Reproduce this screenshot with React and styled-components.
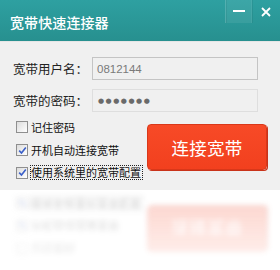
import React from "react";
import styled, { createGlobalStyle } from "styled-components";

const Global = createGlobalStyle`
  html, body { margin: 0; padding: 0; background: #ffffff; }
  body { width: 280px; height: 270px; overflow: hidden; font-family: "Noto Sans CJK SC", "Noto Sans", sans-serif; }
`;

const Page = styled.div`
  width: 280px;
  height: 270px;
  display: flex;
  flex-direction: column;
  background: #ffffff;
`;

const Window = styled.div`
  width: 280px;
  height: 190px;
  background: #f0f0f0;
  display: flex;
  flex-direction: column;
`;

const TitleBar = styled.div`
  height: 41px;
  flex: none;
  display: flex;
  align-items: flex-start;
  background: linear-gradient(#2ea0a1, #27908f);
  border-bottom: 1px solid #e6e6e6;
`;

const Title = styled.div`
  flex: 1;
  padding: 13px 0 0 10px;
  color: #ffffff;
  font-size: 14px;
  line-height: 18px;
  font-weight: 500;
  letter-spacing: 0.1px;
`;

const WinButton = styled.div`
  width: ${(p) => p.$w}px;
  height: 23px;
  display: flex;
  align-items: center;
  justify-content: center;
  background: ${(p) => (p.$hl ? "rgba(255,255,255,0.07)" : "transparent")};
  border-left: 1px solid rgba(255, 255, 255, 0.12);
  box-shadow: inset 1px 0 0 rgba(0, 0, 0, 0.06);
`;

const Form = styled.div`
  display: flex;
  flex-direction: column;
  gap: 9px;
  padding: 15px 22px 0 13px;
`;

const Row = styled.div`
  display: flex;
  align-items: center;
`;

const Label = styled.div`
  width: 79px;
  font-size: 12.5px;
  color: #222;
  line-height: 23px;
  white-space: nowrap;
`;

const Field = styled.div`
  flex: 1;
  height: 21px;
  border: 1px solid ${(p) => p.$border};
  background: #f0f0f0;
  display: flex;
  align-items: center;
  padding-left: 4px;
  font-family: "Liberation Sans", Arial, sans-serif;
  font-size: 11.5px;
  color: #7a7a7a;
`;

const Dots = styled.span`
  font-family: "DejaVu Sans", sans-serif;
  font-size: 7px;
  letter-spacing: 1.5px;
  color: #6a6a6a;
  padding-left: 1px;
`;

const Lower = styled.div`
  display: flex;
  padding: 4px 13px 2px 16px;
  height: 74px;
  box-sizing: border-box;
  opacity: ${(p) => (p.$ghost ? 0.24 : 1)};
`;

const Checks = styled.div`
  flex: 1;
  display: flex;
  flex-direction: column;
`;

const CheckRow = styled.div`
  height: 24px;
  display: flex;
  align-items: center;
  gap: 3px;
`;

const Box = styled.div`
  width: 10px;
  height: 10px;
  border: 1px solid #8f8f8f;
  background: linear-gradient(135deg, #dcdcdc, #ffffff);
  display: flex;
  align-items: center;
  justify-content: center;
  flex: none;
`;

const CheckText = styled.span`
  font-size: 11px;
  color: #111;
  line-height: 13px;
  outline: ${(p) => (p.$focus ? "1px dotted #222" : "none")};
  padding: 0 1px 0 0;
  white-space: nowrap;
`;

const ConnectButton = styled.div`
  margin-top: 8px;
  width: 118px;
  height: 44px;
  border: 1px solid #d9381a;
  border-radius: 4px;
  background: linear-gradient(#f74a27, #f2401e);
  box-shadow: 1px 1px 0 #c9331a;
  color: #ffffff;
  font-size: 17.5px;
  display: flex;
  align-items: center;
  justify-content: center;
  letter-spacing: 0.3px;
`;

const Reflection = styled.div`
  height: 80px;
  overflow: hidden;
  background: #ffffff;
`;

const Mirror = styled.div`
  transform: scaleY(-1);
  filter: blur(2.4px);
  -webkit-mask-image: linear-gradient(to top, rgba(0,0,0,1), rgba(0,0,0,0.3));
  mask-image: linear-gradient(to top, rgba(0,0,0,1), rgba(0,0,0,0.3));
`;

const Check = () => (
  <svg width="9" height="9" viewBox="0 0 9 9">
    <path d="M1.2 4.6 L3.5 7 L7.8 1.5" fill="none" stroke="#3a5fc8" strokeWidth="1.6" />
  </svg>
);

const CheckItem = ({ checked, focus, children }) => (
  <CheckRow>
    <Box>{checked && <Check />}</Box>
    <CheckText $focus={focus}>{children}</CheckText>
  </CheckRow>
);

const LowerPart = ({ ghost }) => (
  <Lower $ghost={ghost}>
    <Checks>
      <CheckItem>记住密码</CheckItem>
      <CheckItem checked>开机自动连接宽带</CheckItem>
      <CheckItem checked focus>使用系统里的宽带配置</CheckItem>
    </Checks>
    <ConnectButton>连接宽带</ConnectButton>
  </Lower>
);

export default function App() {
  return (
    <Page>
      <Global />
      <Window>
        <TitleBar>
          <Title>宽带快速连接器</Title>
          <WinButton $w={25} $hl>
            <svg width="12" height="3" viewBox="0 0 12 3">
              <rect x="0" y="0" width="12" height="2" fill="#ffffff" />
            </svg>
          </WinButton>
          <WinButton $w={28}>
            <svg width="10" height="10" viewBox="0 0 10 10">
              <path d="M1 1 L9 9 M9 1 L1 9" stroke="#ffffff" strokeWidth="1.8" />
            </svg>
          </WinButton>
        </TitleBar>
        <Form>
          <Row>
            <Label>宽带用户名：</Label>
            <Field $border="#c4c4c4">0812144</Field>
          </Row>
          <Row>
            <Label>宽带的密码：</Label>
            <Field $border="#dedede">
              <Dots>●●●●●●●</Dots>
            </Field>
          </Row>
        </Form>
        <LowerPart />
      </Window>
      <Reflection>
        <Mirror>
          <LowerPart ghost />
        </Mirror>
      </Reflection>
    </Page>
  );
}
